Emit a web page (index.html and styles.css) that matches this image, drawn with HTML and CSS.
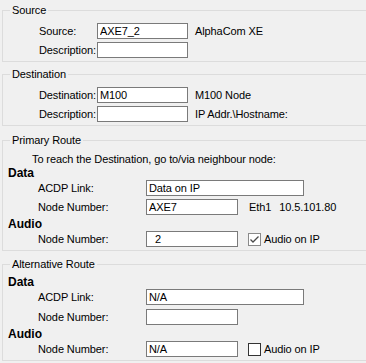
FILE: index.html
```html
<!DOCTYPE html>
<html>
    <head>
        <title>Route Settings</title>
        <link rel="stylesheet" href="styles.css">
    </head>
    <body>
        <div class="main">
            <fieldset class="group group-source">
                <legend>Source</legend>
                <div class="row first">
                    <span class="lbl">Source:</span>
                    <input class="box" type="text" value="AXE7_2">
                    <span class="note">AlphaCom XE</span>
                </div>
                <div class="row">
                    <span class="lbl">Description:</span>
                    <input class="box" type="text" value="">
                </div>
            </fieldset>

            <fieldset class="group group-dest">
                <legend>Destination</legend>
                <div class="row first">
                    <span class="lbl">Destination:</span>
                    <input class="box" type="text" value="M100">
                    <span class="note">M100 Node</span>
                </div>
                <div class="row">
                    <span class="lbl">Description:</span>
                    <input class="box" type="text" value="">
                    <span class="note">IP Addr.\Hostname:</span>
                </div>
            </fieldset>

            <fieldset class="group group-primary">
                <legend>Primary Route</legend>
                <div class="hint">To reach the Destination, go to/via neighbour node:</div>
                <div class="sub">Data</div>
                <div class="row route wide-row">
                    <span class="lbl">ACDP Link:</span>
                    <input class="box box-wide" type="text" value="Data on IP">
                </div>
                <div class="row route node-row">
                    <span class="lbl">Node Number:</span>
                    <input class="box box-node" type="text" value="AXE7">
                    <span class="eth">Eth1</span>
                    <span class="ip">10.5.101.80</span>
                </div>
                <div class="sub">Audio</div>
                <div class="row route">
                    <span class="lbl">Node Number:</span>
                    <input class="box box-node" type="text" value="  2">
                    <span class="check checked">
                        <svg width="11" height="11" viewBox="0 0 11 11">
                            <path d="M1.5 5.5 L4 8 L9.5 2.5" fill="none" stroke="#4a4a4a" stroke-width="1.3"/>
                        </svg>
                    </span>
                    <span class="check-text">Audio on IP</span>
                </div>
            </fieldset>

            <fieldset class="group group-alt">
                <legend>Alternative Route</legend>
                <div class="sub sub-first">Data</div>
                <div class="row route alt-wide">
                    <span class="lbl">ACDP Link:</span>
                    <input class="box box-wide" type="text" value="N/A">
                </div>
                <div class="row route node-row">
                    <span class="lbl">Node Number:</span>
                    <input class="box box-node" type="text" value="">
                </div>
                <div class="sub">Audio</div>
                <div class="row route">
                    <span class="lbl">Node Number:</span>
                    <input class="box box-node" type="text" value="N/A">
                    <span class="check"></span>
                    <span class="check-text">Audio on IP</span>
                </div>
            </fieldset>
        </div>
    </body>
</html>
```

FILE: styles.css
```css
body {
    margin: 0;
    background: #f0f0f0;
    font-family: "Liberation Sans", Arial, sans-serif;
    font-size: 11px;
    letter-spacing: -0.1px;
    color: #000;
    overflow: hidden;
}
.main {
    padding: 0;
    margin: 0;
}
.group {
    margin: 0 0 0 2px;
    padding: 0 0 3px 0;
    border: 1px solid #dcdcdc;
    border-right: 0;
    min-width: 0;
}
.group legend {
    margin-left: 7px;
    padding: 0 2px;
    line-height: 14px;
}
.group-source {
    margin-top: 3px;
}
.group-dest {
    margin-top: 5px;
}
.group-primary {
    margin-top: 7px;
}
.group-alt {
    margin-top: 6px;
}
.row {
    display: flex;
    align-items: center;
    height: 16px;
    margin-bottom: 3px;
    padding-left: 36px;
}
.row:last-child {
    margin-bottom: 0;
}
.row.first {
    margin-top: 6px;
}
.lbl {
    width: 58px;
    flex: none;
}
.box {
    box-sizing: border-box;
    width: 91px;
    height: 16px;
    margin: 0;
    padding: 0 2px;
    border: 1px solid #7a7a7a;
    background: #fff;
    font-family: inherit;
    font-size: 11px;
    letter-spacing: -0.1px;
    color: #000;
    white-space: pre;
    outline: none;
}
.note {
    margin-left: 7px;
}
.hint {
    margin: 5px 0 0 29px;
    line-height: 14px;
}
.sub {
    margin-left: 5px;
    font-weight: bold;
    font-size: 12px;
    letter-spacing: 0;
    line-height: 14px;
}
.sub-first {
    margin-top: 4px;
}
.route {
    padding-left: 35px;
}
.route .lbl {
    width: 108px;
}
.box-wide {
    width: 158px;
}
.box-node {
    width: 92px;
}
.node-row {
    margin-bottom: 2px;
}
.alt-wide {
    margin-bottom: 4px;
}
.eth {
    margin-left: 11px;
}
.ip {
    margin-left: 8px;
}
.check {
    box-sizing: border-box;
    width: 13px;
    height: 13px;
    margin-left: 10px;
    border: 1px solid #333;
    background: #fff;
    display: flex;
    align-items: center;
    justify-content: center;
}
.check.checked {
    border-color: #8a8a8a;
}
.check-text {
    margin-left: 3px;
}
```
